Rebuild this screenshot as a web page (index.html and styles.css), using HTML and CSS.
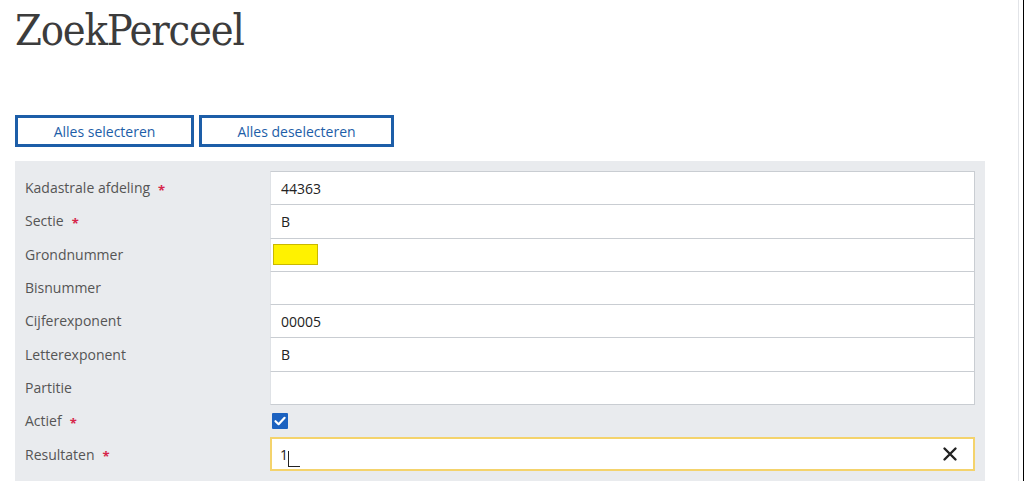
FILE: index.html
```html
<!DOCTYPE html>
<html lang="nl">
<head>
<meta charset="utf-8">
<title>ZoekPerceel</title>
<link rel="stylesheet" href="styles.css">
</head>
<body>
<div class="page">
  <main class="main">
    <h1 class="title">ZoekPerceel</h1>
    <div class="actions">
      <button class="btn btn-select" type="button">Alles selecteren</button>
      <button class="btn btn-deselect" type="button">Alles deselecteren</button>
    </div>
    <section class="panel">
      <div class="row">
        <div class="label">Kadastrale afdeling<span class="req">*</span></div>
        <div class="field">44363</div>
      </div>
      <div class="row">
        <div class="label">Sectie<span class="req">*</span></div>
        <div class="field">B</div>
      </div>
      <div class="row">
        <div class="label">Grondnummer</div>
        <div class="field field-mark"><span class="mark"></span></div>
      </div>
      <div class="row">
        <div class="label">Bisnummer</div>
        <div class="field"></div>
      </div>
      <div class="row">
        <div class="label">Cijferexponent</div>
        <div class="field">00005</div>
      </div>
      <div class="row">
        <div class="label">Letterexponent</div>
        <div class="field">B</div>
      </div>
      <div class="row">
        <div class="label">Partitie</div>
        <div class="field"></div>
      </div>
      <div class="row">
        <div class="label">Actief<span class="req">*</span></div>
        <div class="check-wrap">
          <span class="checkbox">
            <svg viewBox="0 0 16 16" width="16" height="16"><path d="M3.5 8.2 L6.6 11.2 L12.6 4.8" fill="none" stroke="#fff" stroke-width="2.2" stroke-linecap="round" stroke-linejoin="round"/></svg>
          </span>
        </div>
      </div>
      <div class="row">
        <div class="label">Resultaten<span class="req">*</span></div>
        <div class="field field-focus">
          <span class="value">1<span class="caret"></span></span>
          <svg class="clear" viewBox="0 0 16 16" width="16" height="16"><path d="M2.5 2.5 L13.5 13.5 M13.5 2.5 L2.5 13.5" stroke="#222" stroke-width="2.4" stroke-linecap="round"/></svg>
        </div>
      </div>
    </section>
  </main>
  <div class="edge"></div>
</div>
</body>
</html>
```
FILE: styles.css
```css
html, body {
  margin: 0;
  padding: 0;
  background: #fff;
}
body {
  font-family: "Open Sans", "Noto Sans", sans-serif;
  color: #333;
  overflow: hidden;
}
.page {
  display: flex;
  height: 481px;
}
.main {
  flex: 1;
  padding-left: 15px;
  min-width: 0;
}
.edge {
  width: 4px;
  border-left: 1px solid #e2e4e8;
  border-right: 1px solid #000;
}
.title {
  margin: 0;
  padding-top: 4px;
  height: 64px;
  font-family: "DejaVu Serif Condensed", "DejaVu Serif", serif;
  font-stretch: condensed;
  font-weight: normal;
  font-size: 43px;
  letter-spacing: -1.2px;
  line-height: 52px;
  color: #3c3c3c;
}
.actions {
  display: flex;
  gap: 5px;
  margin-top: 47px;
}
.btn {
  height: 32px;
  box-sizing: border-box;
  background: #fff;
  border: 3px solid #1d5ea8;
  color: #1d5ea8;
  font-family: "Open Sans", "Noto Sans", sans-serif;
  font-size: 14px;
  padding: 0;
  cursor: pointer;
}
.btn-select { width: 179px; }
.btn-deselect { width: 195px; }
.panel {
  margin-top: 14px;
  width: 970px;
  box-sizing: border-box;
  background: #e9ebee;
  padding: 10px 10px 20px 10px;
}
.row {
  display: flex;
  align-items: center;
  height: 33.3px;
}
.label {
  width: 245px;
  font-size: 14px;
  color: #555;
  display: flex;
  align-items: center;
}
.req {
  color: #d6254a;
  font-size: 13px;
  font-weight: bold;
  margin-left: 8px;
  position: relative;
  top: 2px;
}
.field {
  flex: 1;
  height: 34.3px;
  box-sizing: border-box;
  background: #fff;
  border: 1px solid #c9cdd2;
  border-left-color: #dfe2e6;
  margin-bottom: -1px;
  display: flex;
  align-items: center;
  padding-left: 10px;
  font-size: 14px;
  color: #222;
}
.field-mark {
  padding-left: 2px;
}
.mark {
  display: inline-block;
  width: 43px;
  height: 19px;
  background: #fff200;
  border: 1px solid #c9b800;
}
.check-wrap {
  flex: 1;
  display: flex;
  align-items: center;
  padding-left: 2px;
}
.checkbox {
  display: inline-flex;
  width: 16px;
  height: 16px;
  background: #1c62c0;
  border-radius: 1px;
}
.field-focus {
  height: 34px;
  border: 2px solid #f4d36c;
  padding-left: 8px;
  padding-right: 15px;
  justify-content: space-between;
  margin-bottom: 0;
}
.value {
  display: inline-flex;
  align-items: flex-end;
}
.caret {
  display: inline-block;
  width: 11px;
  height: 15px;
  border-left: 1px solid #222;
  border-bottom: 1px solid #222;
  position: relative;
  top: 3px;
}
.clear {
  display: block;
}
```
